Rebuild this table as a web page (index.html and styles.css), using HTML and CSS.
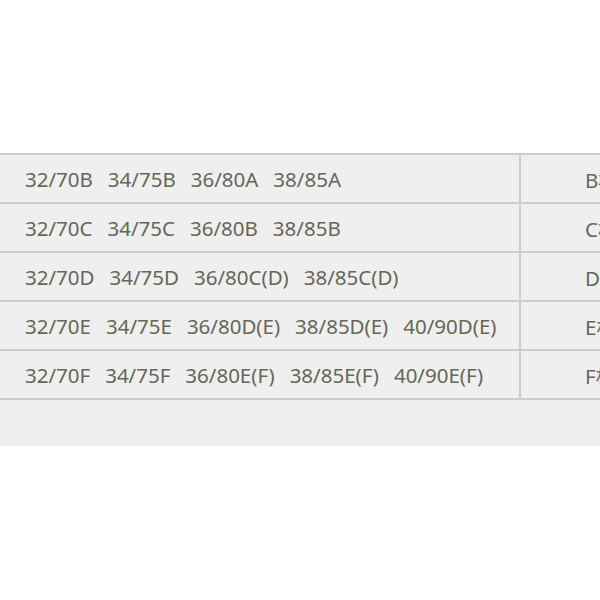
FILE: index.html
```html
<!DOCTYPE html>
<html>
<head>
<meta charset="utf-8">
<link rel="stylesheet" href="styles.css">
</head>
<body>
<div class="page">
  <div class="table">
    <div class="row">
      <div class="sizes"><span>32/70B</span><span>34/75B</span><span>36/80A</span><span>38/85A</span></div>
      <div class="cup">B杯</div>
    </div>
    <div class="row">
      <div class="sizes"><span>32/70C</span><span>34/75C</span><span>36/80B</span><span>38/85B</span></div>
      <div class="cup">C杯</div>
    </div>
    <div class="row">
      <div class="sizes"><span>32/70D</span><span>34/75D</span><span>36/80C(D)</span><span>38/85C(D)</span></div>
      <div class="cup">D杯</div>
    </div>
    <div class="row">
      <div class="sizes"><span>32/70E</span><span>34/75E</span><span>36/80D(E)</span><span>38/85D(E)</span><span>40/90D(E)</span></div>
      <div class="cup">E杯</div>
    </div>
    <div class="row">
      <div class="sizes"><span>32/70F</span><span>34/75F</span><span>36/80E(F)</span><span>38/85E(F)</span><span>40/90E(F)</span></div>
      <div class="cup">F杯</div>
    </div>
  </div>
  <div class="footer"></div>
</div>
</body>
</html>
```

FILE: styles.css
```css
html, body {
  margin: 0;
  padding: 0;
  background: #ffffff;
  overflow: hidden;
}
.page {
  width: 600px;
  height: 600px;
  overflow: hidden;
  padding-top: 153px;
  box-sizing: border-box;
}
.table {
  background: #efefef;
  border-top: 2px solid #cdcdc8;
  width: 700px;
}
.row {
  display: grid;
  grid-template-columns: 521px 1fr;
  height: 47px;
  border-bottom: 2px solid #cdcdc8;
}
.sizes {
  display: flex;
  align-items: center;
  gap: 15px;
  padding-left: 25px;
  border-right: 2px solid #cdcdc8;
  font-family: "Noto Sans", "Open Sans", sans-serif;
  font-size: 20.5px;
  color: #66665a;
  white-space: nowrap;
}
.cup {
  display: flex;
  align-items: center;
  padding-left: 64px;
  font-family: "Noto Sans", "Noto Sans CJK SC", sans-serif;
  font-size: 20.5px;
  color: #66665a;
  white-space: nowrap;
}
.footer {
  height: 46px;
  background: #efefef;
  width: 600px;
}
```
